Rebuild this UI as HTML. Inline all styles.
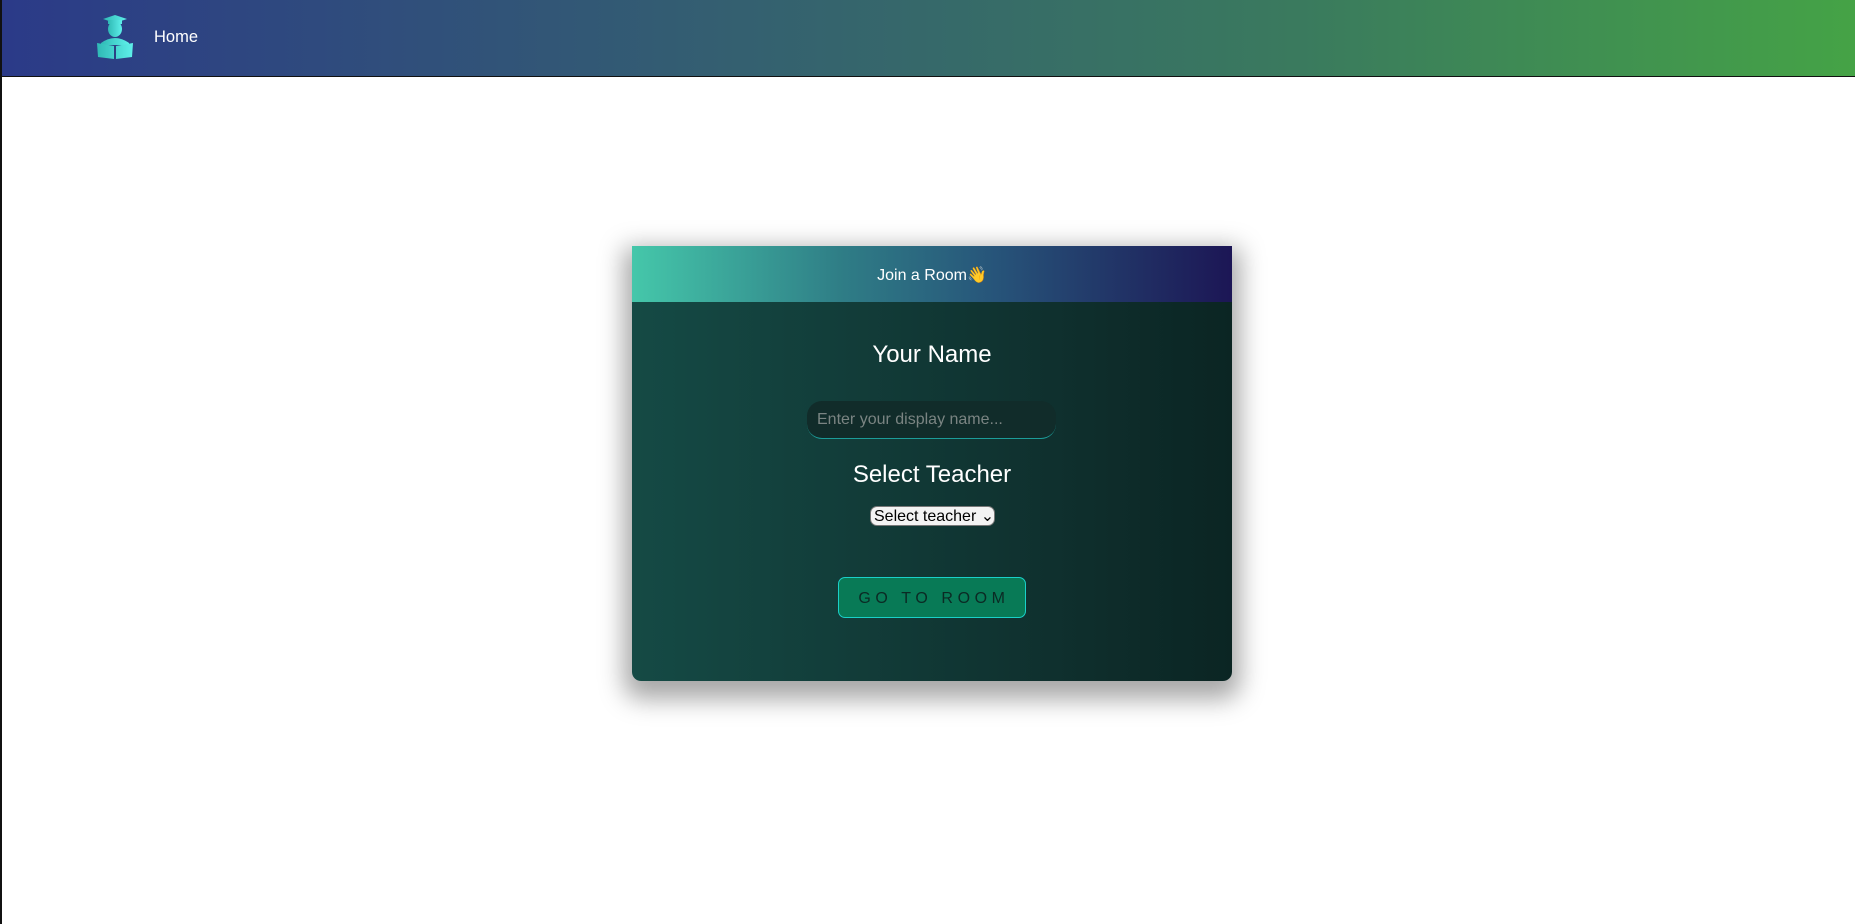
<!DOCTYPE html>
<html><head><meta charset="utf-8"><style>
html,body{margin:0;padding:0;}
body{width:1855px;height:924px;background:#fff;font-family:"Liberation Sans",sans-serif;position:relative;overflow:hidden;border-left:2px solid #111;box-sizing:border-box;}
.nav{position:absolute;left:0;top:0;width:1853px;height:76px;background:linear-gradient(90deg,#2b3a88 0%,#346070 40%,#3a7a5e 70%,#45a346 100%);border-bottom:1.5px solid #111;}
.home{position:absolute;left:152px;top:28px;color:#fff;font-size:16.5px;}
.logo{position:absolute;left:93px;top:13px;}
.card{position:absolute;left:630px;top:246px;width:600px;height:435px;border-radius:0 0 9px 9px;background:linear-gradient(90deg,#154a45 0%,#0f302e 70%,#0b2523 100%);box-shadow:0 10px 25px 8px rgba(0,0,0,.35);overflow:hidden;}
.hdr{height:56px;background:linear-gradient(90deg,#45c7aa 0%,#2f7d86 35%,#27557a 60%,#1c1655 100%);color:#fff;text-align:center;line-height:59px;font-size:16px;}
.t{position:absolute;width:100%;text-align:center;color:#fff;font-size:24px;}
.inp{position:absolute;left:175px;top:155px;width:249px;height:38px;box-sizing:border-box;border-radius:15px;background:#112c2a;border-bottom:1.5px solid #1c9c98;color:#7a8482;font-size:16px;padding:10px 10px;white-space:nowrap;}
.sel{position:absolute;left:238px;top:260px;width:125px;height:20px;box-sizing:border-box;border:1px solid #777;border-radius:7px;background:#f3f3f3;color:#000;font-size:16px;line-height:19px;padding-left:3px;white-space:nowrap;overflow:hidden;}
.btn{position:absolute;left:206px;top:331px;width:188px;height:41px;box-sizing:border-box;border:1.5px solid #1ad0c8;border-radius:7px;background:#087a56;color:#0b2a24;font-size:16px;letter-spacing:4.6px;text-align:center;line-height:41px;padding-left:4px;}
</style></head><body>
<div class="nav">
<svg class="logo" width="40" height="48" viewBox="0 0 40 48">
<defs><linearGradient id="g" x1="0" x2="1"><stop offset="0" stop-color="#2fb9b5"/><stop offset="1" stop-color="#5ef0ea"/></linearGradient></defs>
<polygon points="8,6 20,2 32,6 20,10" fill="url(#g)"/>
<rect x="13" y="7" width="14" height="4" fill="url(#g)"/>
<ellipse cx="20" cy="16" rx="7" ry="8" fill="url(#g)"/>
<path d="M6 30 Q20 20 34 30 L34 32 L6 32Z" fill="url(#g)"/>
<path d="M2 30 L19 33 L19 46 L3 44Z M21 33 L38 30 L37 44 L21 46Z" fill="url(#g)"/>
</svg>
<div class="home">Home</div>
</div>
<div class="card">
<div class="hdr">Join a Room👋</div>
<div class="t" style="top:95px">Your Name</div>
<div class="inp">Enter your display name...</div>
<div class="t" style="top:215px">Select Teacher</div>
<div class="sel">Select teacher&nbsp;⌄</div>
<div class="btn">GO TO ROOM</div>
</div>
</body></html>
